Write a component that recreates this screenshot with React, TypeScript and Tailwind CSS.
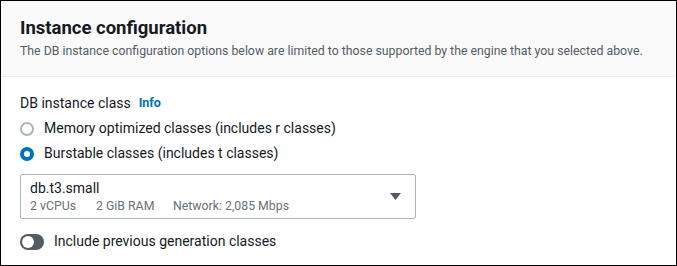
import React, { useState } from 'react';

const font = { fontFamily: 'Roboto, "Open Sans", Arial, sans-serif' };

const App = () => {
  const [choice, setChoice] = useState('burstable');
  const [prevGen, setPrevGen] = useState(false);

  return (
    <div className="w-[677px] h-[266px] bg-white" style={font}>
      <div className="h-full border border-black flex flex-col">
        {/* Header */}
        <div className="bg-[#fafafa] border-b border-[#eaeded] h-[76px] px-[19px] pt-[15px]">
          <h2 className="text-[18.5px] leading-[24px] font-bold text-[#16191f]">Instance configuration</h2>
          <p className="text-[12.3px] leading-[18px] text-[#545b64] mt-[2px]">
            The DB instance configuration options below are limited to those supported by the engine that you selected above.
          </p>
        </div>

        {/* Body */}
        <div className="px-[19px] pt-[15px]">
          <div className="flex items-center gap-[8px] h-[22px]">
            <span className="text-[14px] text-[#16191f]">DB instance class</span>
            <span className="text-[12.5px] font-bold text-[#0073bb]">Info</span>
          </div>

          <div className="mt-[4px] flex flex-col gap-[4px]">
            {[
              { id: 'memory', label: 'Memory optimized classes (includes r classes)' },
              { id: 'burstable', label: 'Burstable classes (includes t classes)' },
            ].map(opt => (
              <label key={opt.id} className="flex items-center gap-[10px] h-[21px] cursor-pointer" onClick={() => setChoice(opt.id)}>
                {choice === opt.id ? (
                  <span className="w-[14px] h-[14px] rounded-full border-[4px] border-[#0073bb] bg-white" />
                ) : (
                  <span className="w-[14px] h-[14px] rounded-full border-[2px] border-[#aab7b8] bg-white" />
                )}
                <span className="text-[14px] text-[#16191f]">{opt.label}</span>
              </label>
            ))}
          </div>

          {/* Select */}
          <div className="mt-[10px] w-[396px] h-[45px] border border-[#aab7b8] rounded-[2px] flex items-center pl-[9px] pr-[14px]">
            <div className="flex-1">
              <div className="text-[14px] leading-[19px] text-[#16191f]">db.t3.small</div>
              <div className="flex text-[12.3px] leading-[17px] text-[#687078]">
                <span className="w-[66px]">2 vCPUs</span>
                <span className="w-[77px]">2 GiB RAM</span>
                <span>Network: 2,085 Mbps</span>
              </div>
            </div>
            <svg width="11" height="7" viewBox="0 0 11 7">
              <polygon points="0,0 11,0 5.5,7" fill="#545b64" />
            </svg>
          </div>

          {/* Toggle */}
          <div className="mt-[12px] flex items-center gap-[10px] cursor-pointer" onClick={() => setPrevGen(!prevGen)}>
            <span className={`w-[24px] h-[16px] rounded-full flex items-center px-[2px] ${prevGen ? 'bg-[#0073bb] justify-end' : 'bg-[#545b64] justify-start'}`}>
              <span className="w-[12px] h-[12px] rounded-full bg-white" />
            </span>
            <span className="text-[14px] text-[#16191f]">Include previous generation classes</span>
          </div>
        </div>
      </div>
    </div>
  );
};

export default App;
